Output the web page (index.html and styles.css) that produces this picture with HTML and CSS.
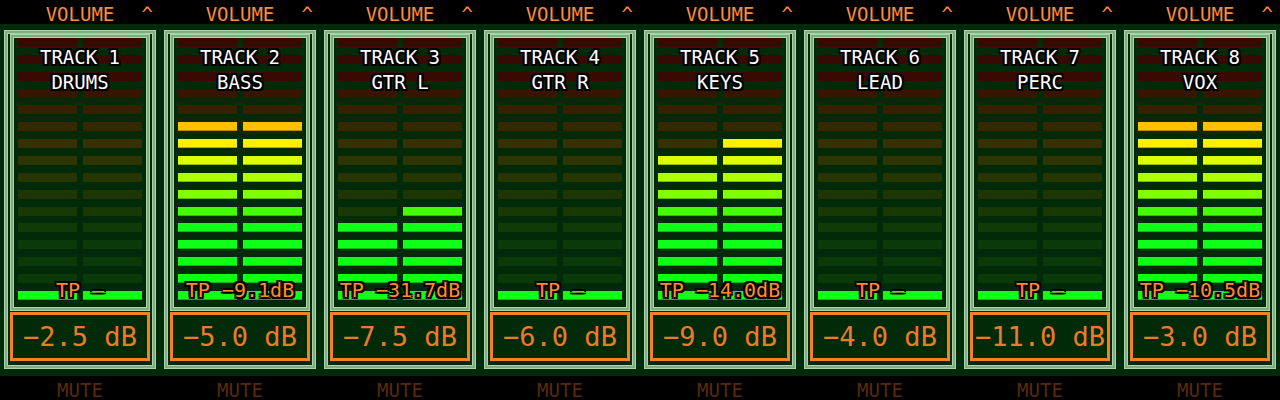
FILE: index.html
```html
<!DOCTYPE html>
<html lang="en">
<head>
<meta charset="utf-8">
<title>Mixer</title>
<link rel="stylesheet" href="styles.css">
</head>
<body>
<div class="mixer" id="mixer"></div>
<script src="script.js"></script>
</body>
</html>
```

FILE: styles.css
```css
* { box-sizing: border-box; }

html, body {
  margin: 0;
  background: #000;
}

body {
  width: 1280px;
  height: 400px;
  overflow: hidden;
  font-family: "DejaVu Sans Mono", "Liberation Mono", monospace;
}

.mixer {
  display: flex;
}

.strip {
  width: 160px;
  display: flex;
  flex-direction: column;
}

/* header row: section title + collapse caret */
.strip-head {
  position: relative;
  height: 24px;
  line-height: 28px;
  text-align: center;
  font-size: 19px;
  color: #ff8a38;
  background: #000;
}

.caret {
  position: absolute;
  top: 0;
  right: 7px;
}

.strip-body {
  height: 352px;
  padding: 6px 4px 0;
  background: #002a08;
}

/* bevelled double rule: light lines with a softer stripe between */
.frame,
.meter {
  border: 4px double #a8d4a8;
  background: linear-gradient(#002a08, #002a08) padding-box, #7eae7e border-box;
}

.frame {
  height: 339px;
  display: flex;
  flex-direction: column;
  padding: 0 2px 4px;
}

.meter {
  position: relative;
  height: 277px;
  display: flex;
  gap: 6px;
  padding: 0 4px 7px;
}

.channel {
  flex: 1;
  display: flex;
  flex-direction: column;
  justify-content: space-between;
}

.seg {
  height: 9px;
}

.seg.on {
  box-shadow: inset 0 -1px 0 rgba(0, 0, 0, 0.28);
}

/* unlit segment tints, top (loud) to bottom (quiet) */
.s0, .s1, .s2 { background: #380a02; }
.s3  { background: #381402; }
.s4  { background: #382002; }
.s5  { background: #382802; }
.s6  { background: #363002; }
.s7  { background: #2e3402; }
.s8  { background: #263602; }
.s9  { background: #1e3602; }
.s10 { background: #183804; }
.s11 { background: #103a06; }
.s12, .s13, .s14, .s15 { background: #0a3a0a; }

/* lit segment colours */
.s0.on, .s1.on, .s2.on { background: #ff2000; }
.s3.on  { background: #ff6000; }
.s4.on  { background: #ff9000; }
.s5.on  { background: #ffc000; }
.s6.on  { background: #fff000; }
.s7.on  { background: #ddff00; }
.s8.on  { background: #aeff00; }
.s9.on  { background: #80ff00; }
.s10.on { background: #44ff00; }
.s11.on, .s12.on, .s13.on, .s14.on, .s15.on { background: #10ff18; }

.outlined {
  text-shadow:
    2px 0 #000, -2px 0 #000, 0 2px #000, 0 -2px #000,
    2px 2px #000, -2px -2px #000, 2px -2px #000, -2px 2px #000;
}

.track-name {
  position: absolute;
  top: 7px;
  left: 0;
  right: 0;
  text-align: center;
  font-size: 19px;
  line-height: 25px;
  color: #fff;
}

.peak {
  position: absolute;
  top: 242px;
  left: 0;
  right: 0;
  text-align: center;
  font-size: 20px;
  line-height: 20px;
  color: #ff8a30;
  white-space: nowrap;
}

.gain {
  height: 49px;
  margin-top: 1px;
  border: 3px solid #f58025;
  text-align: center;
  font-size: 27px;
  line-height: 43px;
  color: #ec7a2a;
}

.strip-foot {
  height: 24px;
  line-height: 28px;
  text-align: center;
  font-size: 19px;
  color: #5a2a04;
  background: #000;
}
```

FILE: script.js
```js
// Channel data: first lit segment per side (0 = top of meter, 16 = silent)
const tracks = [
  { num: 1, name: "DRUMS", left: 15, right: 15, peak: "TP –",        gain: "−2.5 dB" },
  { num: 2, name: "BASS",  left: 5,  right: 5,  peak: "TP −9.1dB",   gain: "−5.0 dB" },
  { num: 3, name: "GTR L", left: 11, right: 10, peak: "TP −31.7dB",  gain: "−7.5 dB" },
  { num: 4, name: "GTR R", left: 15, right: 15, peak: "TP –",        gain: "−6.0 dB" },
  { num: 5, name: "KEYS",  left: 7,  right: 6,  peak: "TP −14.0dB",  gain: "−9.0 dB" },
  { num: 6, name: "LEAD",  left: 15, right: 15, peak: "TP –",        gain: "−4.0 dB" },
  { num: 7, name: "PERC",  left: 15, right: 15, peak: "TP –",        gain: "−11.0 dB" },
  { num: 8, name: "VOX",   left: 5,  right: 5,  peak: "TP −10.5dB",  gain: "−3.0 dB" }
];

const SEGMENTS = 16;

function el(tag, cls, text) {
  const node = document.createElement(tag);
  if (cls) node.className = cls;
  if (text !== undefined) node.textContent = text;
  return node;
}

function channel(litFrom) {
  const col = el("div", "channel");
  for (let i = 0; i < SEGMENTS; i++) {
    col.appendChild(el("div", "seg s" + i + (i >= litFrom ? " on" : "")));
  }
  return col;
}

const mixer = document.getElementById("mixer");

tracks.forEach(t => {
  const strip = el("section", "strip");

  const head = el("div", "strip-head", "VOLUME");
  head.appendChild(el("span", "caret", "^"));
  strip.appendChild(head);

  const body = el("div", "strip-body");
  const frame = el("div", "frame");
  const meter = el("div", "meter");
  meter.appendChild(channel(t.left));
  meter.appendChild(channel(t.right));

  const label = el("div", "track-name outlined");
  label.appendChild(el("div", "", "TRACK " + t.num));
  label.appendChild(el("div", "", t.name));
  meter.appendChild(label);
  meter.appendChild(el("div", "peak outlined", t.peak));

  frame.appendChild(meter);
  frame.appendChild(el("div", "gain", t.gain));
  body.appendChild(frame);
  strip.appendChild(body);

  strip.appendChild(el("div", "strip-foot", "MUTE"));
  mixer.appendChild(strip);
});
```
